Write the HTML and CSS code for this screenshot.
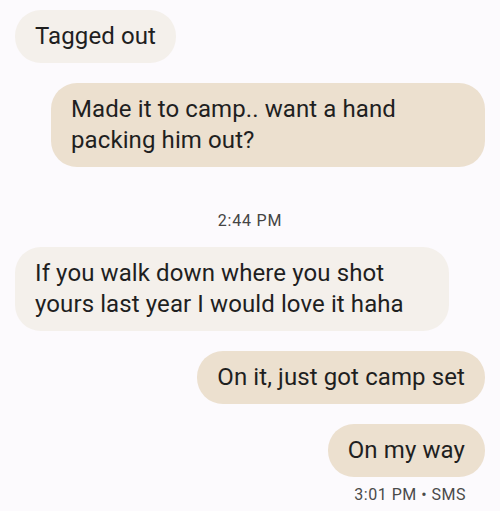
FILE: index.html
```html
<html>
<head>
    <title>Messages</title>
    <link rel="stylesheet" href="styles.css">
</head>
<body>
    <div class="thread">
        <div class="msg in">
            <div class="bubble">Tagged out</div>
        </div>
        <div class="msg out">
            <div class="bubble">Made it to camp.. want a hand packing him out?</div>
        </div>

        <div class="time">2:44 PM</div>

        <div class="msg in">
            <div class="bubble">If you walk down where you shot yours last year I would love it haha</div>
        </div>
        <div class="msg out">
            <div class="bubble">On it, just got camp set</div>
        </div>
        <div class="msg out">
            <div class="bubble">On my way</div>
        </div>
        <div class="status">3:01 PM &bull; SMS</div>
    </div>
</body>
</html>
```

FILE: styles.css
```css
body {
    margin: 0;
    background-color: #fcfafd;
    font-family: Roboto, "Noto Sans", sans-serif;
    color: #1f1f1f;
}

.thread {
    display: flex;
    flex-direction: column;
    gap: 20px;
    padding: 10px 15px 0 15px;
}

.msg {
    display: flex;
}

.msg.out {
    justify-content: flex-end;
}

.bubble {
    max-width: 394px;
    padding: 11px 20px;
    font-size: 24px;
    line-height: 31px;
    letter-spacing: 0.1px;
    border-radius: 26px;
}

.in .bubble {
    background-color: #f4f0eb;
}

.out .bubble {
    background-color: #ece0cf;
}

.time {
    text-align: center;
    font-size: 16px;
    line-height: 20px;
    letter-spacing: 0.8px;
    color: #444444;
    margin: 24px 0 -4px 0;
}

.status {
    margin-top: -12px;
    text-align: right;
    padding-right: 19px;
    font-size: 16px;
    line-height: 20px;
    letter-spacing: 0.5px;
    color: #4a4a4a;
}
```
